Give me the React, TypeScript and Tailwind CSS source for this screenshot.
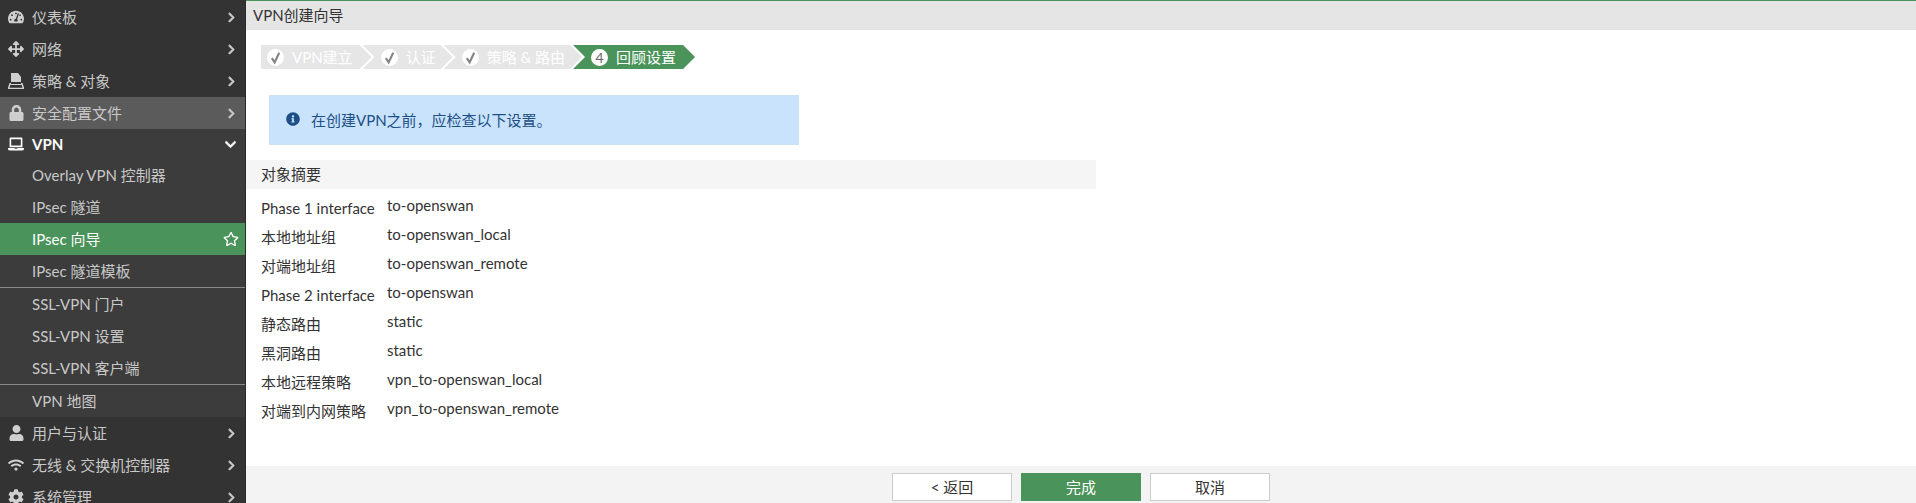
import React from "react";
import {
  FaTachometerAlt,
  FaArrowsAlt,
  FaLock,
  FaLaptop,
  FaUser,
  FaWifi,
  FaCog,
  FaChevronRight,
  FaChevronDown,
  FaInfoCircle,
  FaRegStar,
} from "react-icons/fa";

const PolicyIcon = () => (
  <svg viewBox="0 0 16 16" className="w-[16px] h-[16px]" fill="currentColor">
    <path d="M3 0h7l3 4v5H3z" />
    <path d="M1.5 10H3v1h10v-1h1.5L16 14.5V16H0v-1.5zM1.6 14.7h12.8l-.7-2.7H2.3z" />
  </svg>
);

const CheckMark = () => (
  <svg viewBox="0 0 16 16" className="w-[17px] h-[17px]" fill="none" stroke="#858585" strokeWidth="2">
    <path d="M4.5 8.5L7.2 12.5L11.5 3.5" />
  </svg>
);

const NavItem = ({ icon, label, active }: { icon: React.ReactNode; label: string; active?: boolean }) => (
  <div className={`flex items-center h-[32px] pl-[8px] pr-[8px] ${active ? "bg-[#5b5b5b]" : ""}`}>
    <span className="w-[24px] flex justify-start text-[#cfcfcf]">{icon}</span>
    <span className="flex-1 text-[15px] text-[#c8c8c8]">{label}</span>
    <FaChevronRight className="w-[7px] h-[11px] mr-[2px] text-[#c8c8c8] stroke-current stroke-[30]" />
  </div>
);

const SubItem = ({ label, active, divider }: { label: string; active?: boolean; divider?: boolean }) => (
  <div
    className={`flex items-center h-[32px] pl-[32px] pr-[6px] text-[15px] ${
      active ? "bg-[#4a935a] text-white" : "text-[#c8c8c8]"
    } ${divider ? "box-content border-b border-[#8a8a8a]" : ""}`}
  >
    <span className="flex-1">{label}</span>
    {active && <FaRegStar className="w-[16px] h-[16px] text-white" />}
  </div>
);

const Step = ({ label, num, current, first }: { label: string; num?: number; current?: boolean; first?: boolean }) => (
  <div
    className={`flex items-center h-[24px] text-[15px] text-white ${
      current ? "bg-[#4a935a] -ml-[9px] pl-[18px] pr-[19px]" : "bg-[#e6e6e6]"
    } ${first ? "pl-[6px] pr-[19px] [clip-path:polygon(0_0,calc(100%-12px)_0,100%_50%,calc(100%-12px)_100%,0_100%)]" : ""} ${
      !first && !current ? "-ml-[9px] pl-[18px] pr-[17px]" : ""
    } ${
      !first
        ? "[clip-path:polygon(0_0,calc(100%-12px)_0,100%_50%,calc(100%-12px)_100%,0_100%,12px_50%)]"
        : ""
    }`}
  >
    <span className="w-[17px] h-[17px] rounded-full bg-white flex items-center justify-center mr-[8px] text-[#666] text-[14px]">
      {current ? num : <CheckMark />}
    </span>
    {label}
  </div>
);

const rows = [
  ["Phase 1 interface", "to-openswan"],
  ["本地地址组", "to-openswan_local"],
  ["对端地址组", "to-openswan_remote"],
  ["Phase 2 interface", "to-openswan"],
  ["静态路由", "static"],
  ["黑洞路由", "static"],
  ["本地远程策略", "vpn_to-openswan_local"],
  ["对端到内网策略", "vpn_to-openswan_remote"],
];

export default function App() {
  return (
    <div className="flex h-[503px] w-[1916px] overflow-hidden bg-white font-['Lato','Noto_Sans_CJK_SC',sans-serif] text-[15px] text-[#333]">
      <aside className="w-[246px] shrink-0 h-full overflow-hidden bg-[#333333] border-r border-[#2a2a2a] pt-px">
        <NavItem icon={<FaTachometerAlt className="w-[16px] h-[16px]" />} label="仪表板" />
        <NavItem icon={<FaArrowsAlt className="w-[16px] h-[16px]" />} label="网络" />
        <NavItem icon={<PolicyIcon />} label="策略 & 对象" />
        <NavItem icon={<FaLock className="w-[15px] h-[16px] ml-[1px]" />} label="安全配置文件" active />
        <div className="flex items-center h-[30px] pl-[8px] pr-[8px] bg-[#3c3c3c]">
          <span className="w-[24px] text-white">
            <FaLaptop className="w-[16px] h-[16px]" />
          </span>
          <span className="flex-1 font-bold text-white">VPN</span>
          <FaChevronDown className="w-[11px] h-[13px] mr-[1px] text-white stroke-current stroke-[20]" />
        </div>
        <div className="bg-[#3c3c3c]">
          <SubItem label="Overlay VPN 控制器" />
          <SubItem label="IPsec 隧道" />
          <SubItem label="IPsec 向导" active />
          <SubItem label="IPsec 隧道模板" divider />
          <SubItem label="SSL-VPN 门户" />
          <SubItem label="SSL-VPN 设置" />
          <SubItem label="SSL-VPN 客户端" divider />
          <SubItem label="VPN 地图" />
        </div>
        <NavItem icon={<FaUser className="w-[15px] h-[16px] ml-[1px]" />} label="用户与认证" />
        <NavItem icon={<FaWifi className="w-[16px] h-[14px]" />} label="无线 & 交换机控制器" />
        <NavItem icon={<FaCog className="w-[16px] h-[16px]" />} label="系统管理" />
      </aside>

      <main className="flex-1 flex flex-col h-full border-t border-[#4a935a]">
        <div className="h-[29px] shrink-0 bg-[#e5e5e5] flex items-center pl-[7px]">VPN创建向导</div>
        <div className="flex-1">
          <div className="flex pl-[15px] pt-[15px]">
            <Step first label="VPN建立" />
            <Step label="认证" />
            <Step label="策略 & 路由" />
            <Step current num={4} label="回顾设置" />
          </div>
          <div className="ml-[23px] mt-[26px] w-[530px] h-[50px] bg-[#c9e3fd] flex items-center pl-[17px] text-[#1c4f86]">
            <FaInfoCircle className="w-[14px] h-[14px] mr-[11px] -mt-[2px]" />
            在创建VPN之前，应检查以下设置。
          </div>
          <div className="mt-[15px] w-[850px] h-[29px] bg-[#f5f5f5] flex items-center pl-[15px]">对象摘要</div>
          <div className="pt-[2px] pl-[15px]">
            {rows.map(([label, value]) => (
              <div key={label + value} className="flex h-[29px]">
                <span className="w-[126px] pt-[6px]">{label}</span>
                <span className="pt-[3px]">{value}</span>
              </div>
            ))}
          </div>
        </div>
        <div className="h-[37px] shrink-0 bg-[#f3f3f3] flex justify-center gap-[9px] pt-[7px]">
          <button className="w-[120px] h-[28px] bg-white border border-[#cccccc]">&lt; 返回</button>
          <button className="w-[120px] h-[28px] bg-[#4a935a] text-white">完成</button>
          <button className="w-[120px] h-[28px] bg-white border border-[#cccccc]">取消</button>
        </div>
      </main>
    </div>
  );
}
